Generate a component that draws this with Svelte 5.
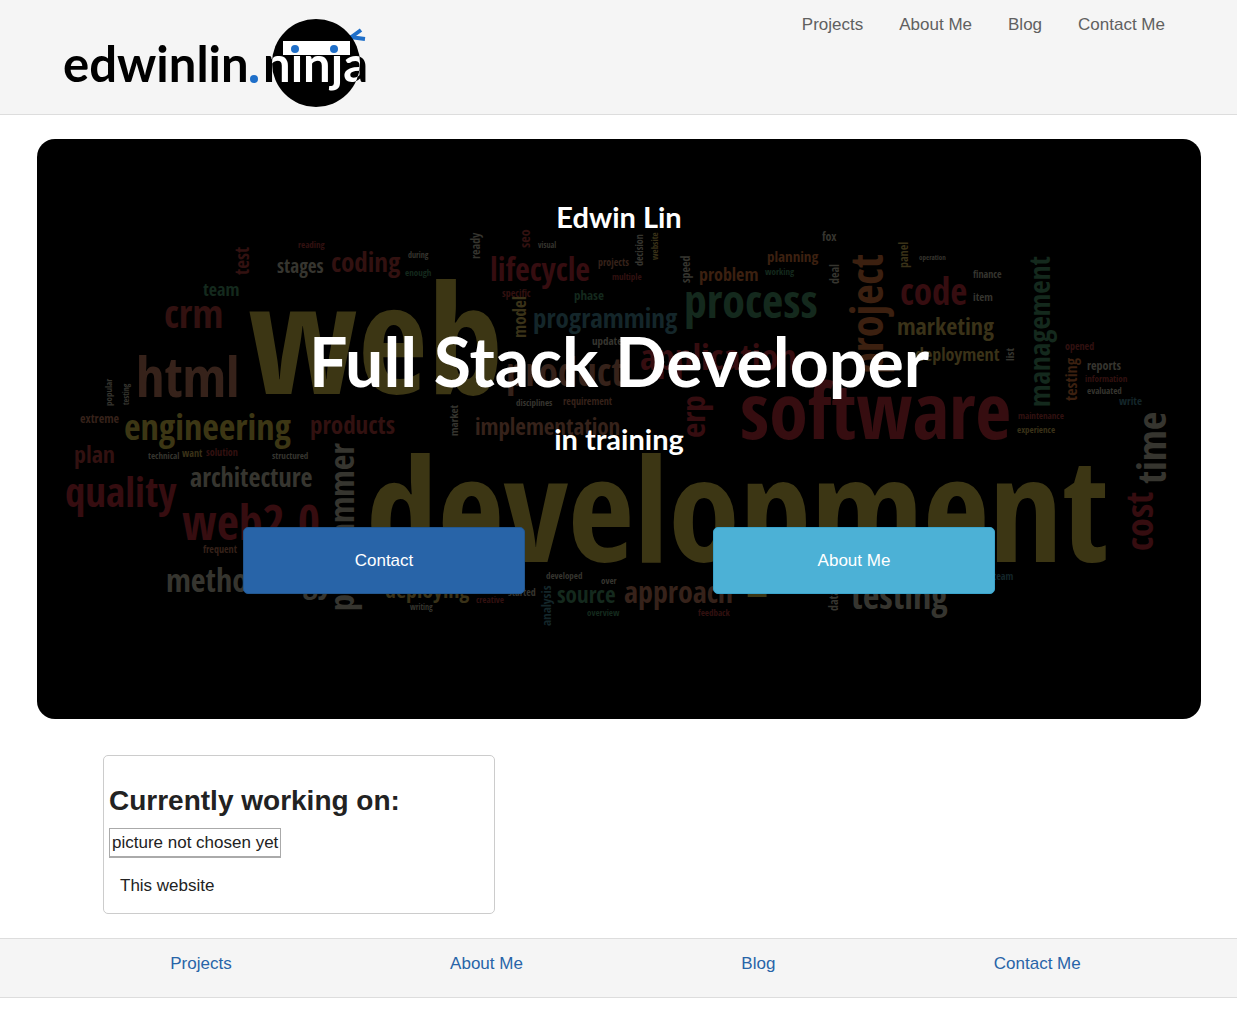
<script>
  const links = ['Projects', 'About Me', 'Blog', 'Contact Me'];

  // text, x, baseline y, size, colour, reads upwards
  const words = [
    ['web', 248, 394, 152, 'olive'],
    ['development', 366, 562, 144, 'olive'],
    ['html', 136, 397, 56, 'brown'],
    ['crm', 164, 328, 40, 'red'],
    ['team', 203, 296, 18, 'green'],
    ['stages', 277, 273, 19, 'grey'],
    ['coding', 331, 272, 27, 'red'],
    ['reading', 298, 248, 9, 'red'],
    ['test', 249, 275, 19, 'red', true],
    ['during', 408, 258, 8, 'grey'],
    ['enough', 405, 276, 9, 'green'],
    ['lifecycle', 490, 281, 32, 'wine'],
    ['ready', 480, 259, 12, 'grey', true],
    ['specific', 502, 297, 10, 'red'],
    ['seo', 530, 248, 14, 'red', true],
    ['visual', 538, 248, 8, 'grey'],
    ['projects', 598, 266, 10, 'brown'],
    ['decision', 643, 266, 10, 'grey', true],
    ['website', 658, 260, 9, 'tan', true],
    ['multiple', 612, 280, 9, 'red'],
    ['phase', 574, 300, 13, 'green'],
    ['model', 526, 338, 17, 'tan', true],
    ['programming', 533, 328, 27, 'teal'],
    ['speed', 690, 283, 12, 'grey', true],
    ['problem', 699, 281, 18, 'orange'],
    ['process', 684, 318, 46, 'green'],
    ['working', 765, 275, 9, 'green'],
    ['planning', 767, 262, 15, 'orange'],
    ['fox', 822, 241, 12, 'grey'],
    ['deal', 839, 284, 12, 'grey', true],
    ['project', 883, 374, 44, 'orange', true],
    ['panel', 908, 268, 12, 'tan', true],
    ['operation', 919, 260, 7, 'grey'],
    ['code', 900, 305, 37, 'wine'],
    ['finance', 973, 278, 10, 'grey'],
    ['item', 973, 301, 11, 'grey'],
    ['marketing', 897, 335, 24, 'tan'],
    ['deployment', 915, 361, 18, 'tan'],
    ['list', 1014, 361, 11, 'grey', true],
    ['management', 1050, 407, 29, 'green', true],
    ['testing', 1077, 401, 16, 'orange', true],
    ['opened', 1065, 350, 10, 'red'],
    ['reports', 1087, 370, 12, 'grey'],
    ['information', 1085, 382, 9, 'red'],
    ['evaluated', 1087, 394, 9, 'grey'],
    ['write', 1119, 405, 11, 'teal'],
    ['maintenance', 1018, 419, 9, 'red'],
    ['experience', 1017, 433, 9, 'tan'],
    ['time', 1166, 484, 40, 'grey', true],
    ['cost', 1153, 551, 38, 'wine', true],
    ['software', 740, 439, 78, 'wine'],
    ['application', 640, 370, 36, 'wine'],
    ['product', 506, 386, 39, 'brown'],
    ['erp', 705, 438, 33, 'wine', true],
    ['updates', 592, 345, 11, 'grey'],
    ['disciplines', 516, 406, 9, 'grey'],
    ['requirement', 563, 405, 10, 'brown'],
    ['implementation', 475, 435, 23, 'brown'],
    ['market', 458, 436, 11, 'grey', true],
    ['engineering', 124, 440, 36, 'olive'],
    ['products', 310, 434, 25, 'red'],
    ['popular', 112, 406, 9, 'grey', true],
    ['testing', 129, 405, 8, 'grey', true],
    ['extreme', 80, 423, 12, 'brown'],
    ['plan', 74, 463, 24, 'red'],
    ['technical', 148, 459, 9, 'grey'],
    ['want', 182, 457, 10, 'tan'],
    ['solution', 206, 456, 10, 'red'],
    ['structured', 272, 459, 9, 'grey'],
    ['quality', 65, 507, 41, 'wine'],
    ['architecture', 190, 487, 26, 'grey'],
    ['web2.0', 182, 540, 48, 'wine'],
    ['frequent', 203, 553, 10, 'brown'],
    ['methodology', 166, 592, 32, 'grey'],
    ['programmer', 354, 611, 34, 'grey', true],
    ['deploying', 385, 598, 22, 'tan'],
    ['writing', 410, 610, 8, 'grey'],
    ['creative', 476, 603, 9, 'red'],
    ['started', 508, 596, 10, 'grey'],
    ['developed', 546, 579, 9, 'grey'],
    ['analysis', 551, 626, 13, 'teal', true],
    ['over', 601, 584, 9, 'grey'],
    ['source', 557, 603, 23, 'green'],
    ['overview', 587, 616, 9, 'green'],
    ['approach', 624, 603, 30, 'brown'],
    ['feedback', 698, 616, 9, 'red'],
    ['data', 838, 611, 12, 'grey', true],
    ['testing', 851, 609, 36, 'grey'],
    ['team', 993, 580, 10, 'teal']
  ];
</script>

<header class="top">
  <a class="brand" href="#home" aria-label="edwinlin.ninja">
    <svg width="310" height="96" viewBox="60 14 310 96" aria-hidden="true">
      <defs>
        <clipPath id="head"><circle cx="316" cy="63" r="44" /></clipPath>
      </defs>
      <text class="mark" x="63" y="82">edwinlin</text>
      <circle class="blue" cx="254" cy="79" r="4" />
      <text id="ninja" class="mark" x="263" y="82">ninja</text>
      <path class="tie" d="M350 38 L361 30 M350 37 L365 39" />
      <circle cx="316" cy="63" r="44" />
      <rect class="white" x="283" y="41" width="67" height="14" />
      <g clip-path="url(#head)"><use class="white" href="#ninja" /></g>
      <circle class="blue" cx="295" cy="49" r="4" />
      <circle class="blue" cx="334" cy="49" r="4" />
    </svg>
  </a>
  <nav aria-label="Main">
    {#each links as link}
      <a href="#{link}">{link}</a>
    {/each}
  </nav>
</header>

<main>
  <section class="hero">
    <svg class="cloud" viewBox="37 139 1164 580" preserveAspectRatio="xMidYMid slice" aria-hidden="true">
      {#each words as [text, x, y, size, tone, up]}
        <text class={tone} font-size={size} transform="translate({x} {y}){up ? ' rotate(-90)' : ''}">{text}</text>
      {/each}
    </svg>
    <div class="intro">
      <h2>Edwin Lin</h2>
      <h1>Full Stack Developer</h1>
      <h2>in training</h2>
      <div class="actions">
        <button class="primary" type="button">Contact</button>
        <button class="info" type="button">About Me</button>
      </div>
    </div>
  </section>

  <section class="work">
    <article class="card">
      <h3>Currently working on:</h3>
      <span class="thumb">picture not chosen yet</span>
      <p>This website</p>
    </article>
  </section>
</main>

<footer>
  {#each links as link}
    <a href="#{link}">{link}</a>
  {/each}
</footer>

<style>
  :global(body) {
    margin: 0;
    background: #fff;
    color: #222;
    font: 17px/24px "Liberation Sans", Arial, sans-serif;
  }
  a { text-decoration: none; }

  .top {
    display: flex;
    justify-content: space-between;
    align-items: flex-start;
    padding: 13px 72px 4px 60px;
    background: #f5f5f5;
    border-bottom: 1px solid #ddd;
  }
  .brand { display: flex; padding: 1px 0 0; }
  .mark { font: 700 49px Lato, sans-serif; }
  .white { fill: #fff; }
  .blue { fill: #1f6fc9; }
  .tie { fill: none; stroke: #1f6fc9; stroke-width: 4; }
  nav { display: flex; gap: 36px; }
  nav a { color: #606060; }

  .hero {
    display: grid;
    margin: 24px 36px 0 37px;
    overflow: hidden;
    border-radius: 18px;
    background: #000;
  }
  .cloud, .intro { grid-area: 1 / 1; }
  .cloud { width: 100%; height: 100%; min-height: 580px; }
  .cloud text {
    font-family: "Noto Sans ExtraCondensed", "Open Sans Condensed", "Roboto Condensed", "Liberation Sans Narrow", "DejaVu Sans Condensed", sans-serif;
    font-weight: 700;
  }
  .olive { fill: #3c3614; }
  .brown { fill: #36221a; }
  .red { fill: #321110; }
  .wine { fill: #360d10; }
  .green { fill: #14291d; }
  .teal { fill: #14262a; }
  .grey { fill: #36352f; }
  .tan { fill: #3a3218; }
  .orange { fill: #3c2010; }

  .intro {
    display: flex;
    flex-direction: column;
    align-items: center;
    padding: 60px 112px 0;
    color: #fff;
    text-align: center;
  }
  h1, h2 { margin: 0; font-family: Lato, sans-serif; font-weight: 700; }
  h2 { font-size: 29px; line-height: 36px; }
  h1 { margin: 76px 0 10px; font-size: 68px; line-height: 100px; }
  .actions {
    display: grid;
    grid-template-columns: 1fr 1fr;
    justify-items: center;
    width: 100%;
    margin-top: 70px;
  }
  button {
    width: 60%;
    padding: 20px;
    border: 1px solid;
    border-radius: 5px;
    color: #fff;
    font: 17px/25px "Liberation Sans", Arial, sans-serif;
  }
  .primary { background: #2864a8; border-color: #22578f; }
  .info { background: #4cb1d6; border-color: #3aa3cb; }

  .work { padding: 36px 103px 24px; }
  .card {
    box-sizing: border-box;
    width: 38%;
    padding: 26px 5px 15px;
    border: 1px solid #ccc;
    border-radius: 5px;
  }
  h3 { margin: 0 0 8px; font-size: 28px; line-height: 38px; }
  .thumb {
    display: inline-block;
    padding: 2px 2px 1px;
    border: 1px solid #aaa;
    border-bottom-width: 2px;
  }
  p { margin: 16px 11px 0; }

  footer {
    display: flex;
    justify-content: space-around;
    padding: 13px 47px 21px 61px;
    background: #f5f5f5;
    border: solid #ddd;
    border-width: 1px 0;
  }
  footer a { color: #2864a8; }
</style>
